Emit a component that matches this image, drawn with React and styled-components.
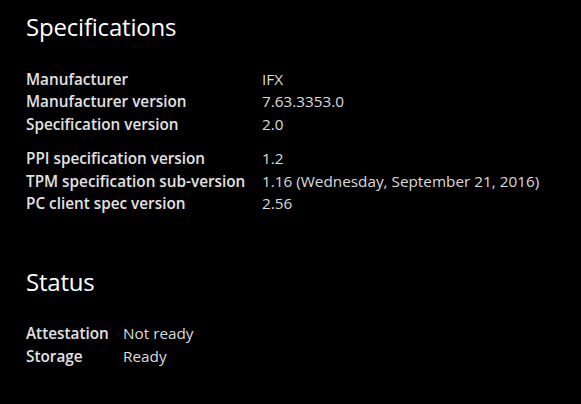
import styled, { createGlobalStyle } from 'styled-components';

const GlobalStyle = createGlobalStyle`
  html, body {
    margin: 0;
    padding: 0;
    background: #000;
  }
  body {
    font-family: "Open Sans", "Noto Sans", sans-serif;
    color: #e6e6e6;
  }
`;

const Page = styled.div`
  width: 581px;
  height: 404px;
  background: #000;
  padding: 10px 26px 0 26px;
  box-sizing: border-box;
  overflow: hidden;
`;

const Heading = styled.h2`
  margin: 0;
  font-size: 24px;
  font-weight: 400;
  line-height: 34px;
  color: #fff;
  letter-spacing: -0.2px;
`;

const Section = styled.section`
  margin-top: ${(p) => p.$top}px;
`;

const Table = styled.div`
  display: grid;
  grid-template-columns: ${(p) => p.$label}px auto;
  margin-top: ${(p) => p.$top || 0}px;
  font-size: 15.3px;
  line-height: 22.4px;
`;

const Label = styled.div`
  font-weight: 600;
  color: #e2e2e2;
  white-space: nowrap;
`;

const Value = styled.div`
  font-weight: 400;
  color: #dcdcdc;
  white-space: nowrap;
`;

const Rows = ({ rows, label, top }) => (
  <Table $label={label} $top={top}>
    {rows.map(([k, v]) => [<Label key={k + 'l'}>{k}</Label>, <Value key={k + 'v'}>{v}</Value>])}
  </Table>
);

const App = () => (
  <>
    <GlobalStyle />
    <Page>
      <Section $top={0}>
        <Heading>Specifications</Heading>
        <Rows
          label={236}
          top={24}
          rows={[
            ['Manufacturer', 'IFX'],
            ['Manufacturer version', '7.63.3353.0'],
            ['Specification version', '2.0'],
          ]}
        />
        <Rows
          label={236}
          top={12}
          rows={[
            ['PPI specification version', '1.2'],
            ['TPM specification sub-version', '1.16 (Wednesday, September 21, 2016)'],
            ['PC client spec version', '2.56'],
          ]}
        />
      </Section>
      <Section $top={51}>
        <Heading>Status</Heading>
        <Rows
          label={97}
          top={23}
          rows={[
            ['Attestation', 'Not ready'],
            ['Storage', 'Ready'],
          ]}
        />
      </Section>
    </Page>
  </>
);

export default App;
